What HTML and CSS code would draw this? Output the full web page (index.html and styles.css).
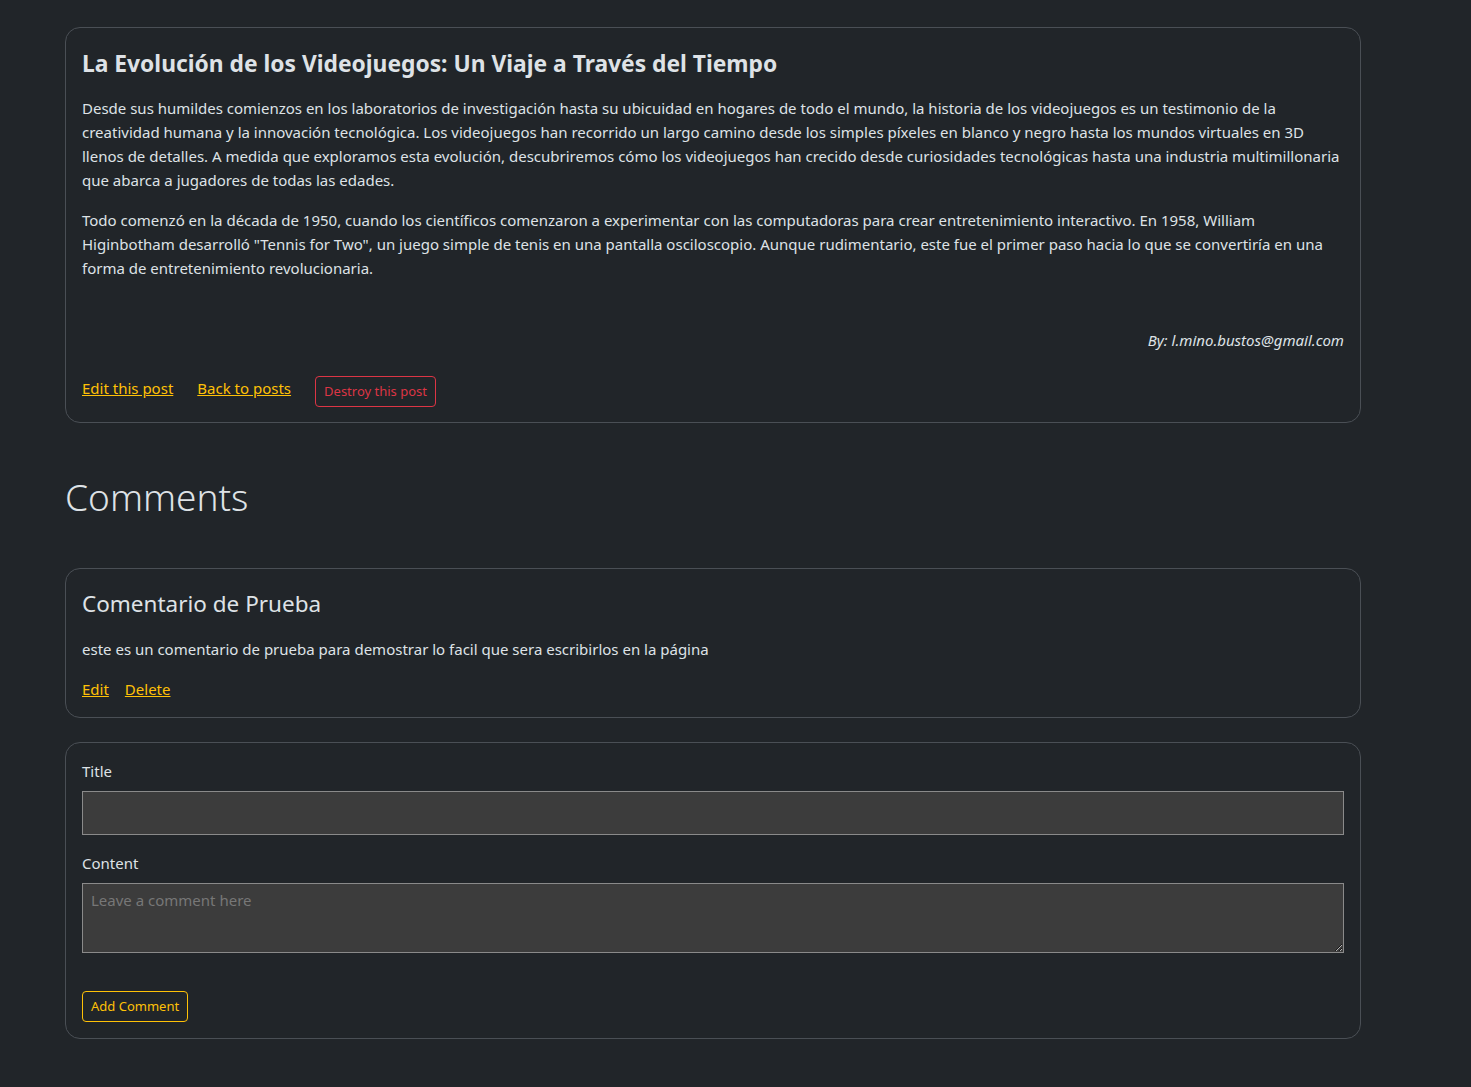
FILE: index.html
```html
<!DOCTYPE html>
<html lang="es">
<head>
<meta charset="utf-8">
<title>Post</title>
<link rel="stylesheet" href="styles.css">
</head>
<body>
<main class="page">
  <article class="card post">
    <h4 class="post-title">La Evolución de los Videojuegos: Un Viaje a Través del Tiempo</h4>
    <div class="post-body">
      <p>Desde sus humildes comienzos en los laboratorios de investigación hasta su ubicuidad en hogares de todo el mundo, la historia de los videojuegos es un testimonio de la creatividad humana y la innovación tecnológica. Los videojuegos han recorrido un largo camino desde los simples píxeles en blanco y negro hasta los mundos virtuales en 3D llenos de detalles. A medida que exploramos esta evolución, descubriremos cómo los videojuegos han crecido desde curiosidades tecnológicas hasta una industria multimillonaria que abarca a jugadores de todas las edades.</p>
      <p>Todo comenzó en la década de 1950, cuando los científicos comenzaron a experimentar con las computadoras para crear entretenimiento interactivo. En 1958, William Higinbotham desarrolló "Tennis for Two", un juego simple de tenis en una pantalla osciloscopio. Aunque rudimentario, este fue el primer paso hacia lo que se convertiría en una forma de entretenimiento revolucionaria.</p>
    </div>
    <p class="author">By: l.mino.bustos@gmail.com</p>
    <div class="actions">
      <a href="#" class="link">Edit this post</a>
      <a href="#" class="link">Back to posts</a>
      <button class="btn btn-danger" type="button">Destroy this post</button>
    </div>
  </article>

  <h1 class="section-title">Comments</h1>

  <section class="card comment">
    <h4 class="comment-title">Comentario de Prueba</h4>
    <p class="comment-text">este es un comentario de prueba para demostrar lo facil que sera escribirlos en la página</p>
    <div class="comment-actions">
      <a href="#" class="link">Edit</a>
      <a href="#" class="link">Delete</a>
    </div>
  </section>

  <form class="card comment-form">
    <label class="label" for="title">Title</label>
    <input class="field" id="title" type="text">
    <label class="label" for="content">Content</label>
    <textarea class="field area" id="content" placeholder="Leave a comment here"></textarea>
    <div class="submit-row">
      <button class="btn btn-warning" type="button">Add Comment</button>
    </div>
  </form>
</main>
</body>
</html>
```

FILE: styles.css
```css
* { box-sizing: border-box; }
html, body {
  margin: 0;
  background: #212529;
  color: #dee2e6;
  font-family: "Noto Sans", "Open Sans", sans-serif;
  font-size: 15px;
  line-height: 24px;
}
.page {
  width: 1296px;
  margin-left: 65px;
  padding-top: 27px;
  padding-bottom: 49px;
}
.card {
  border: 1px solid #4a4f55;
  border-radius: 15px;
  padding: 16px;
}
.post { padding-top: 20px; padding-bottom: 15px; }
.post-title {
  margin: 0 0 16px;
  font-size: 22.8px;
  line-height: 32px;
  font-weight: 700;
  color: #dee2e6;
}
.post-body p { margin: 0 0 16px; }
.author {
  margin: 48px 0 24px;
  text-align: right;
  font-style: italic;
}
.actions {
  display: flex;
  align-items: flex-start;
  gap: 24px;
}
.link {
  color: #ffc107;
  text-decoration: underline;
}
.btn {
  font-family: inherit;
  background: transparent;
  border-radius: 4px;
  font-size: 13px;
  line-height: 21px;
  padding: 4px 8px;
}
.btn-danger {
  color: #dc3545;
  border: 1px solid #dc3545;
}
.btn-warning {
  color: #ffc107;
  border: 1px solid #ffc107;
}
.section-title {
  margin: 50px 0 47px;
  font-size: 37px;
  line-height: 48px;
  font-weight: 300;
}
.comment { padding-top: 19px; padding-bottom: 16px; }
.comment-title {
  margin: 0 0 17px;
  font-size: 22.5px;
  line-height: 32px;
  font-weight: 400;
}
.comment-text { margin: 0 0 16px; }
.comment-actions { display: flex; gap: 16px; }
.comment-form {
  margin-top: 24px;
  display: flex;
  flex-direction: column;
  padding-top: 16px;
}
.label { display: block; margin-bottom: 8px; }
.field {
  display: block;
  width: 100%;
  height: 44px;
  background: #3c3c3c;
  border: 1px solid #8a8a8a;
  color: #dee2e6;
  font-family: inherit;
  font-size: 15px;
  padding: 6px 8px;
  margin-bottom: 16px;
}
.area {
  height: 70px;
  resize: vertical;
  margin-bottom: 38px;
}
.area::placeholder { color: #777; }
```
